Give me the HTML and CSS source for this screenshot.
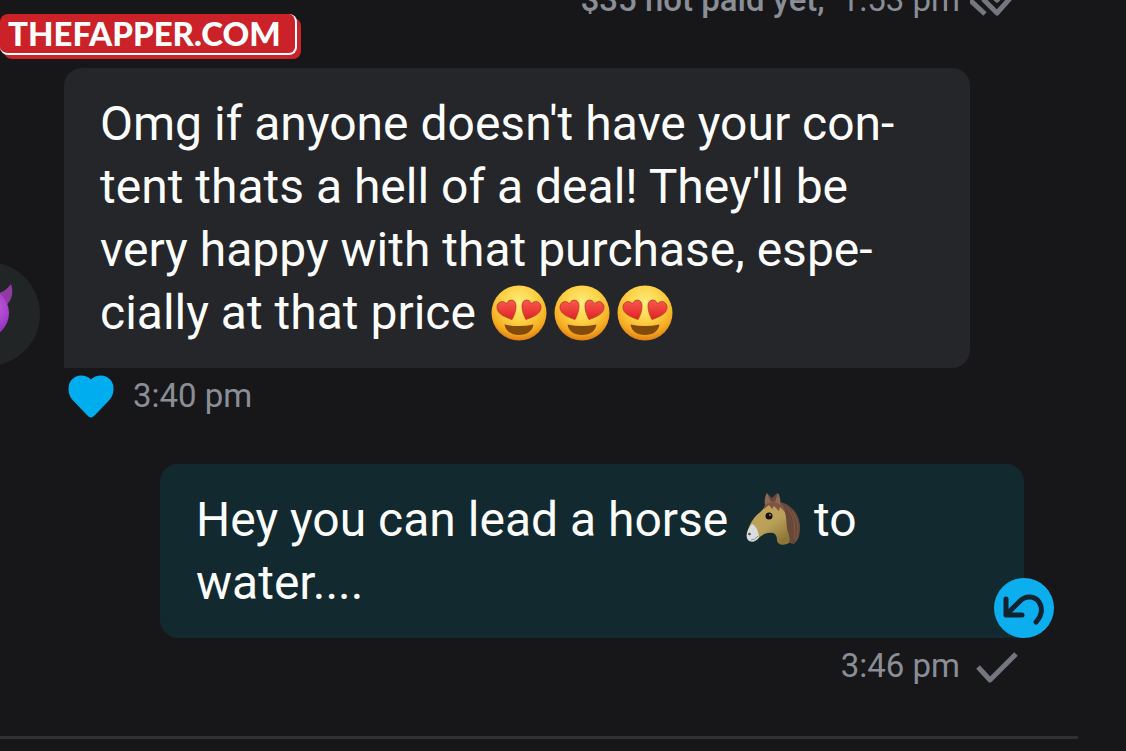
FILE: index.html
```html
<!DOCTYPE html>
<html lang="en">
<head>
<meta charset="utf-8">
<meta name="viewport" content="width=device-width, initial-scale=1">
<title>Chat</title>
<link rel="stylesheet" href="styles.css">
</head>
<body>
<svg class="defs" aria-hidden="true">
  <defs>
    <radialGradient id="face" cx="50%" cy="32%" r="68%">
      <stop offset="0" stop-color="#ffee7c"/><stop offset=".5" stop-color="#fdd045"/><stop offset=".82" stop-color="#f5a91f"/><stop offset="1" stop-color="#dd7d13"/>
    </radialGradient>
    <linearGradient id="eye" x1="0" y1="0" x2="0" y2="1">
      <stop offset="0" stop-color="#fa5a4c"/><stop offset="1" stop-color="#df2229"/>
    </linearGradient>
    <linearGradient id="coat" x1="0" y1="0" x2=".7" y2="1">
      <stop offset="0" stop-color="#c6a458"/><stop offset=".6" stop-color="#b9a05a"/><stop offset="1" stop-color="#8d7638"/>
    </linearGradient>
    <radialGradient id="imp" cx="65%" cy="40%" r="60%">
      <stop offset="0" stop-color="#c763e6"/><stop offset="1" stop-color="#8b25b4"/>
    </radialGradient>
    <symbol id="heart-eyes" viewBox="0 0 56 56">
      <circle cx="28" cy="28" r="27.5" fill="url(#face)"/>
      <g fill="url(#eye)" stroke="#b53a1a" stroke-width=".8">
        <path d="M21 34.500C14 32 6.500 29 6 23C5.500 16.500 12.500 14.500 15.500 19C17 13.500 25 13.500 25 21C25 26 23 31 21 34.500Z"/>
        <path d="M35 34.500C42 32 49.500 29 50 23C50.500 16.500 43.500 14.500 40.500 19C39 13.500 31 13.500 31 21C31 26 33 31 35 34.500Z"/>
      </g>
      <path d="M13.500 39.500Q28 42.500 42.500 39.500C41.500 46 36 50 28 50S14.500 46 13.500 39.500Z" fill="#824b0b"/>
    </symbol>
  </defs>
</svg>

<a class="badge" href="#">THEFAPPER.COM</a>

<main class="chat">
  <div class="meta meta-out">
    <b>$35 not paid yet,</b>
    <time class="after-price">1:53 pm</time>
    <svg class="ticks" viewBox="0 0 54 40" role="img" aria-label="Read"><path d="M0 20L15 34M13 19L27 33L50 7M16 9L27 20L37 9"/></svg>
  </div>

  <article class="incoming">
    <div class="avatar">
      <svg viewBox="0 0 104 104" role="img" aria-label="Avatar">
        <path d="M63 31C68 30 72 26 75 22C78 30 76 40 68 45Z" fill="#8f3aa0"/>
        <circle cx="48" cy="51" r="25" fill="url(#imp)"/>
      </svg>
    </div>
    <p class="bubble bubble-in">Omg if anyone doesn't have your con-<br>tent thats a hell of a deal! They'll be<br>very happy with that purchase, espe-<br>cially at that price <span class="faces"><svg class="emoji" role="img" aria-label="Heart eyes"><use href="#heart-eyes"/></svg><svg class="emoji" role="img" aria-label="Heart eyes"><use href="#heart-eyes"/></svg><svg class="emoji" role="img" aria-label="Heart eyes"><use href="#heart-eyes"/></svg></span></p>
  </article>
  <div class="meta meta-in">
    <button class="like" type="button" aria-label="Liked"><svg viewBox="0 0 46 44"><path d="M23 43.500C21.500 43.500 20 42 17 39L6 27.500C2 23.500 .5 19.500 .5 14.500C.5 7 6 1.500 13 1.500C17 1.500 20.500 3 23 5.500C25.500 3 29 1.500 33 1.500C40 1.500 45.500 7 45.500 14.500C45.500 19.500 44 23.500 40 27.500L29 39C26 42 24.500 43.500 23 43.500Z"/></svg></button>
    <time>3:40 pm</time>
  </div>

  <article class="outgoing">
    <p class="bubble bubble-out">Hey you can lead a horse <svg class="emoji horse" viewBox="0 0 56 56" role="img" aria-label="Horse">
      <path d="M19 9C19 6 19 4 21 1L26 6L31 1C33 3 34 7 34 10C45 12 53 22 54 33C54 41 54 47 48 52L34 49L32 20Z" fill="#694739"/>
      <path d="M40 15C48 22 50 34 48 47M46 19C53 29 53 39 50 48" fill="none" stroke="#7d5a4a" stroke-width="1"/>
      <path d="M18 16C22 10 34 9 38 18C42 27 39 34 43 43C44 48 44 51 41 52C36 54 31 52 31 48C31 45 30 42 27 41C20 40 16 43 12 47C8 51 1 49 1 43C2 34 6 29 9 25C11 22 15 20 18 16Z" fill="url(#coat)"/>
      <path d="M6 32C1 38 -1 44 2 48C5 51 10 50 13 45C12 38 10 34 6 32Z" fill="#d9dde0"/>
      <path d="M18 17C18 11 23 8 30 9C36 10 39 15 39 20L34 15L33 19L28 14L26 17L23 13Z" fill="#805344"/>
      <path d="M19 13C18 8 19 5 21 1L25 10ZM29 10L32 1C34 4 35 9 34 13Z" fill="#8a6a55"/>
      <circle cx="23" cy="24" r="3.500" fill="#150f0a"/><circle cx="24" cy="23" r=".9" fill="#b29367"/>
      <circle cx="3.500" cy="42" r="1.300" fill="#48494b"/>
      <path d="M5 48Q9 48 12 44" fill="none" stroke="#8d8e90"/>
    </svg> to<br>water....</p>
    <button class="undo" type="button" aria-label="Undo"><svg viewBox="0 0 60 60"><path d="M12 21V37H28M13 36L26 23C32 17 41 18 45 24C49 30 48 38 42 44"/></svg></button>
  </article>
  <div class="meta meta-out">
    <time>3:46 pm</time>
    <svg class="ticks" viewBox="0 0 54 40" role="img" aria-label="Sent"><path d="M8 21L20 34L46 8"/></svg>
  </div>
</main>
<footer class="composer"></footer>
</body>
</html>
```
FILE: styles.css
```css
* { box-sizing: border-box; }

body {
  margin: 0;
  height: 100vh;
  display: flex;
  flex-direction: column;
  overflow: hidden;
  background: #17171a;
  color: #fdfdfd;
  font-family: Roboto, "Liberation Sans", sans-serif;
}

button {
  padding: 0;
  border: 0;
  background: none;
}

svg { display: block; }

.defs {
  position: absolute;
  width: 0;
  height: 0;
}

.badge {
  position: absolute;
  top: 14px;
  left: 0;
  padding: 0 14px 0 8px;
  border: solid #fff;
  border-width: 0 2px 2px 0;
  border-radius: 8px;
  background: #cb2229;
  box-shadow: 4px 4px 0 #cb2229;
  color: #fff;
  font: 900 33px/39px Lato, sans-serif;
  text-decoration: none;
}

.chat {
  flex: 1;
  min-height: 0;
  display: flex;
  flex-direction: column;
  justify-content: flex-end;
  padding: 0 102px 42px 0;
}

.chat > * { flex-shrink: 0; }

.meta {
  display: flex;
  align-items: center;
  height: 56px;
  color: #8a8e96;
  font-size: 33px;
  line-height: 40px;
}

.meta b { font-weight: 500; }

.meta-in {
  gap: 19px;
  padding-left: 68px;
}

.meta-out {
  justify-content: flex-end;
  gap: 10px;
}

.after-price { margin-left: 6px; }

.ticks {
  width: 54px;
  height: 40px;
  fill: none;
  stroke: #74777d;
  stroke-width: 5;
  stroke-linejoin: round;
}

.like svg {
  width: 46px;
  height: 44px;
  fill: #00adef;
}

.incoming {
  display: flex;
  align-items: flex-end;
  gap: 24px;
  margin: 40px 54px 0 -64px;
}

.avatar {
  flex: none;
  width: 104px;
  height: 104px;
  margin-bottom: 2px;
  border-radius: 50%;
  background: #222526;
}

.outgoing {
  position: relative;
  margin: 40px 0 0 160px;
}

.bubble {
  margin: 0;
  padding: 24px 36px;
  border-radius: 18px;
  font-size: 48px;
  line-height: 63px;
}

.bubble-in {
  flex: 1;
  border-bottom-left-radius: 0;
  background: #242629;
}

.bubble-out {
  border-bottom-right-radius: 0;
  background: #11292f;
}

.emoji {
  display: inline-block;
  width: 56px;
  height: 56px;
  vertical-align: -12px;
}

.faces {
  display: inline-flex;
  gap: 7px;
  margin-left: 3px;
  vertical-align: -12px;
}

.horse { margin-left: 6px; }

.undo {
  position: absolute;
  right: -30px;
  bottom: 0;
  width: 60px;
  height: 60px;
  border-radius: 50%;
  background: #0daeed;
}

.undo svg {
  fill: none;
  stroke: #10232e;
  stroke-width: 5;
  stroke-linecap: round;
  stroke-linejoin: round;
}

.composer {
  height: 15px;
  margin-right: 48px;
  border-top: 3px solid #303033;
}
```
